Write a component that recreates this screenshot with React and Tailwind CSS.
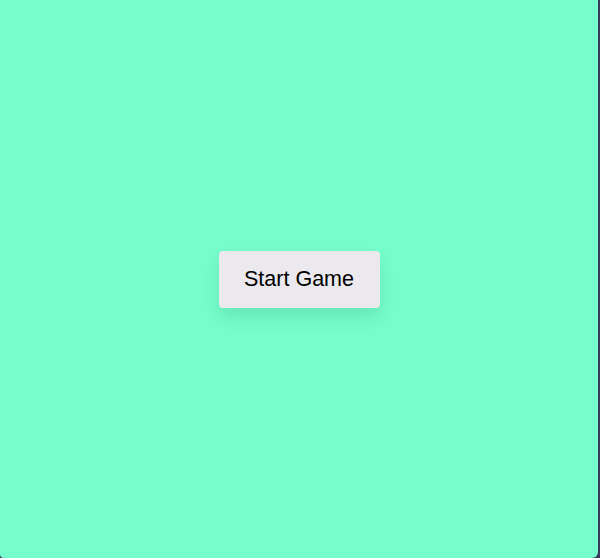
export default function App() {
  return (
    <div className="h-[558px] w-[600px] bg-[#3a3a5c]">
      <div className="flex h-full w-[598px] items-center justify-center rounded-br-[6px] rounded-bl-[4px] bg-[#76fdcc]">
        <button
          className="h-[57px] w-[161px] rounded-[4px] bg-[#ebe9ed] text-[21.5px] text-black shadow-[0_9px_16px_rgba(0,70,40,0.12)]"
          style={{ fontFamily: '"Liberation Sans", Arial, sans-serif' }}
        >
          Start Game
        </button>
      </div>
    </div>
  );
}
